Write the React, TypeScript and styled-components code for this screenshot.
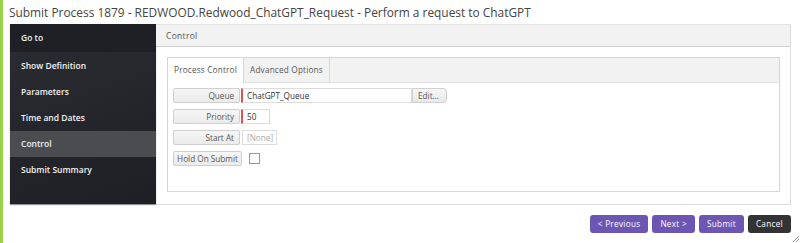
import styled, { createGlobalStyle } from "styled-components";

const GlobalStyle = createGlobalStyle`
  html, body {
    margin: 0;
    padding: 0;
    background: #ffffff;
    font-family: "Open Sans", "Liberation Sans", sans-serif;
  }
`;

const navItems = [
  "Go to",
  "Show Definition",
  "Parameters",
  "Time and Dates",
  "Control",
  "Submit Summary",
];

const App = () => {
  return (
    <>
      <GlobalStyle />
      <Page>
        <GreenBar />
        <Content>
          <Title>
            Submit Process 1879 - REDWOOD.Redwood_ChatGPT_Request - Perform a
            request to ChatGPT
          </Title>
          <MainBox>
            <Sidebar>
              {navItems.map((item, i) => (
                <NavItem key={item} $first={i === 0} $active={item === "Control"}>
                  {item}
                </NavItem>
              ))}
            </Sidebar>
            <Panel>
              <PanelHeader>Control</PanelHeader>
              <PanelBody>
                <TabBox>
                  <TabBar>
                    <Tab $active>Process Control</Tab>
                    <Tab>Advanced Options</Tab>
                  </TabBar>
                  <Fields>
                    <Row>
                      <FieldLabel>Queue</FieldLabel>
                      <Input $required $width={171}>ChatGPT_Queue</Input>
                      <EditButton>Edit...</EditButton>
                    </Row>
                    <Row>
                      <FieldLabel>Priority</FieldLabel>
                      <Input $required $width={29}>50</Input>
                    </Row>
                    <Row>
                      <FieldLabel>Start At</FieldLabel>
                      <Input $width={35} $muted>[None]</Input>
                    </Row>
                    <Row>
                      <FieldLabel $wide>Hold On Submit</FieldLabel>
                      <Checkbox />
                    </Row>
                  </Fields>
                </TabBox>
              </PanelBody>
            </Panel>
          </MainBox>
          <Footer>
            <ActionButton>&lt; Previous</ActionButton>
            <ActionButton>Next &gt;</ActionButton>
            <ActionButton>Submit</ActionButton>
            <ActionButton $dark>Cancel</ActionButton>
          </Footer>
        </Content>
        <Grip>
          <svg width="6" height="6" viewBox="0 0 6 6">
            <path d="M6 0 L0 6 M6 3 L3 6" stroke="#999" strokeWidth="1" />
          </svg>
        </Grip>
      </Page>
    </>
  );
};

const Page = styled.div`
  position: relative;
  display: flex;
  width: 800px;
  height: 243px;
  overflow: hidden;
`;

const GreenBar = styled.div`
  width: 3px;
  flex: none;
  background: #9ad14b;
`;

const Content = styled.div`
  flex: 1;
  display: flex;
  flex-direction: column;
  padding-left: 7px;
`;

const Title = styled.div`
  height: 24px;
  line-height: 24px;
  margin-left: -1px;
  font-size: 11.9px;
  color: #444;
  white-space: nowrap;
`;

const MainBox = styled.div`
  display: flex;
  width: 780px;
  height: 180px;
  border: 1px solid #dcdcdc;
  border-left: none;
  border-top: none;
  box-sizing: content-box;
`;

const Sidebar = styled.div`
  width: 146px;
  flex: none;
  background: linear-gradient(160deg, #2b2d33 0%, #1d1f24 100%);
  box-shadow: 0 1px 1px rgba(0, 0, 0, 0.35);
`;

const NavItem = styled.div<{ $first?: boolean; $active?: boolean }>`
  height: ${(p) => (p.$first ? "28px" : "26px")};
  line-height: ${(p) => (p.$first ? "28px" : "26px")};
  margin-bottom: ${(p) => (p.$first ? "1px" : "0")};
  padding-left: 11px;
  font-size: 8.5px;
  font-weight: 600;
  color: #f2f2f2;
  background: ${(p) =>
    p.$active ? "#4b4c50" : p.$first ? "#1e2025" : "transparent"};
`;

const Panel = styled.div`
  flex: 1;
  display: flex;
  flex-direction: column;
`;

const PanelHeader = styled.div`
  height: 23px;
  line-height: 22px;
  padding-left: 10px;
  background: #f2f2f2;
  border-bottom: 1px solid #cfcfcf;
  border-top: 1px solid #e4e4e4;
  box-sizing: border-box;
  font-size: 8.5px;
  color: #555;
  letter-spacing: 0.3px;
`;

const PanelBody = styled.div`
  flex: 1;
  padding: 10px 10px 12px 11px;
  display: flex;
`;

const TabBox = styled.div`
  flex: 1;
  border: 1px solid #d4d4d4;
  display: flex;
  flex-direction: column;
`;

const TabBar = styled.div`
  display: flex;
  height: 24px;
  background: #f2f2f2;
  border-bottom: 1px solid #e0e0e0;
`;

const Tab = styled.div<{ $active?: boolean }>`
  padding: 0 6px;
  line-height: 24px;
  font-size: 8.2px;
  letter-spacing: 0.2px;
  color: #555;
  background: ${(p) => (p.$active ? "#ffffff" : "#f2f2f2")};
  border-right: 1px solid #d8d8d8;
  margin-bottom: ${(p) => (p.$active ? "-1px" : "0")};
`;

const Fields = styled.div`
  display: flex;
  flex-direction: column;
  gap: 6px;
  padding: 5px 5px 0 5px;
`;

const Row = styled.div`
  display: flex;
  align-items: center;
  height: 15px;
`;

const FieldLabel = styled.div<{ $wide?: boolean }>`
  width: ${(p) => (p.$wide ? "69px" : "67px")};
  height: 15px;
  line-height: 14px;
  box-sizing: border-box;
  border: 1px solid #cfcfcf;
  border-radius: 2px;
  background: linear-gradient(#f6f6f6, #ebebeb);
  font-size: 8.2px;
  color: #555;
  text-align: ${(p) => (p.$wide ? "center" : "right")};
  padding-right: ${(p) => (p.$wide ? "0" : "5px")};
`;

const Input = styled.div<{ $width: number; $required?: boolean; $muted?: boolean }>`
  width: ${(p) => p.$width}px;
  height: 15px;
  line-height: 14px;
  box-sizing: border-box;
  margin-left: ${(p) => (p.$required ? "1px" : "2px")};
  padding-left: 4px;
  border: 1px solid #dcdcdc;
  border-left: ${(p) => (p.$required ? "2px solid #d9534f" : "1px solid #dcdcdc")};
  background: #fff;
  font-size: 8.2px;
  color: ${(p) => (p.$muted ? "#aaa" : "#333")};
`;

const EditButton = styled.div`
  width: 35px;
  height: 15px;
  line-height: 14px;
  box-sizing: border-box;
  border: 1px solid #cfcfcf;
  border-radius: 0 4px 4px 0;
  background: linear-gradient(#f6f6f6, #e9e9e9);
  font-size: 8.2px;
  color: #555;
  padding-left: 5px;
`;

const Checkbox = styled.div`
  width: 11px;
  height: 11px;
  box-sizing: border-box;
  margin-left: 7px;
  border: 1px solid #5cbf6a;
  background: #fff;
`;

const Footer = styled.div`
  display: flex;
  justify-content: flex-end;
  gap: 4px;
  width: 781px;
  margin-top: 10px;
`;

const ActionButton = styled.div<{ $dark?: boolean }>`
  height: 18px;
  line-height: 18px;
  padding: 0 8px;
  border-radius: 3px;
  background: ${(p) => (p.$dark ? "#333333" : "#6d55b4")};
  color: #fff;
  font-size: 8.2px;
  letter-spacing: 0.3px;
`;

const Grip = styled.div`
  position: absolute;
  right: 1px;
  bottom: 1px;
  width: 6px;
  height: 6px;
  line-height: 0;
`;

export default App;
